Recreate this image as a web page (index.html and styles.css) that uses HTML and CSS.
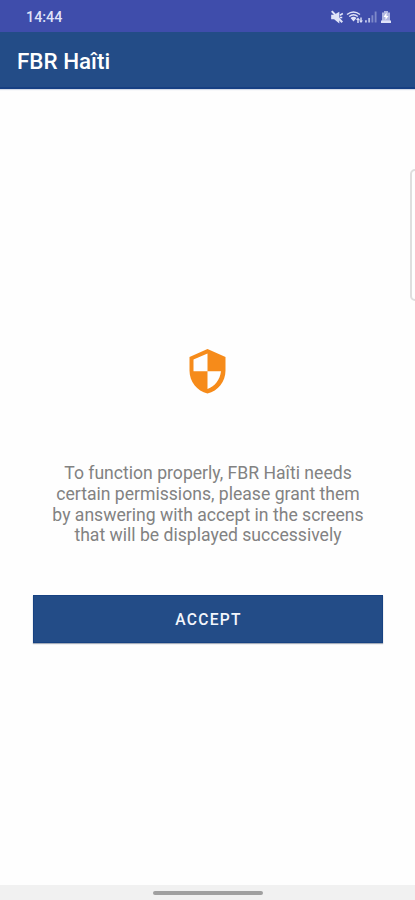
FILE: index.html
```
<!doctype html>
<html lang="en">
<head>
<meta charset="utf-8">
<title>FBR Haîti</title>
<link rel="stylesheet" href="styles.css">
</head>
<body>
<div class="screen">
	<div class="status">
		<span class="time">14:44</span>
		<div class="icons">
			<svg width="14" height="14" viewBox="0 0 24 24"><path fill="currentColor" d="M2 8v8h5l9 7V3L7 8z"/><path stroke="currentColor" stroke-width="3.500" d="M3 2l18 19"/><path stroke="currentColor" stroke-width="2.5" d="M17 9l5-3M17 13h4"/></svg>
			<svg width="17" height="14" viewBox="0 0 17 14"><path fill="none" stroke="currentColor" stroke-width="1.4" d="M1 4.5q6.500-5 13 0M3.200 6.500q4.300-3.500 8.600 0"/><path fill="currentColor" d="M4.500 8q3-2.300 6 0l-3 3.500zM12 7.500l2 2.500h-1.300v3h-1.400v-3H10zM15 13l-2-2.500h1.300v-3h1.400v3H17z"/></svg>
			<svg width="12" height="14" viewBox="0 0 13 14"><path fill="currentColor" opacity=".8" d="M0 10.500h2V13H0zM3.500 8h2v5h-2z"/><path fill="currentColor" opacity=".4" d="M7 5h2v8H7zM10.500 1h2v12h-2z"/></svg>
			<svg class="battery" width="10" height="14" viewBox="0 0 10 14"><path fill="currentColor" opacity=".7" d="M3 1h4v1.500h2V13H1V2.500h2z"/><path fill="currentColor" d="M0 10.500h10V13H0z"/><path fill="#fff" d="M5.500 2.500L2.500 7H4.500v3L7.500 6h-2z"/></svg>
		</div>
	</div>
	<div class="toolbar">FBR Haîti</div>
	<div class="content">
		<svg class="shield" width="37" height="45" viewBox="0 0 37 45"><path fill="#f68b1a" fill-rule="evenodd" d="M18.500 0L0.500 8v13.500C0.500 32.500 8 42 18.500 44.500 29 42 36.500 32.500 36.500 21.500V8zM18.500 4.500V22.200H32C31 30.500 26 37.300 18.500 39.900V22.200H4.500V10.600z"/></svg>
		<p class="message">To function properly, FBR Haîti needs<br>certain permissions, please grant them<br>by answering with accept in the screens<br>that will be displayed successively</p>
		<button class="accept">ACCEPT</button>
	</div>
	<div class="navbar"><div class="handle"></div></div>
	<div class="edge"></div>
</div>
</body>
</html>
```
FILE: styles.css
```
body{
	margin:0;
	font-family:Roboto,"Liberation Sans",sans-serif;
}
.screen{
	position:relative;
	display:flex;
	flex-direction:column;
	width:415px;
	height:900px;
	overflow:hidden;
	background:#fefefe;
}
.status{
	display:flex;
	align-items:center;
	justify-content:space-between;
	box-sizing:border-box;
	height:32px;
	padding:2px 24px 0 26px;
	background:#3f4dab;
	color:#dfe3f8;
}
.time{
	font-size:14.3px;
	font-weight:500;
}
.icons{
	display:flex;
	align-items:center;
	gap:2px;
}
.battery{
	margin-left:2px;
}
.toolbar{
	box-sizing:border-box;
	height:57px;
	padding-left:17px;
	border-bottom:2px solid #163f83;
	background:#234c87;
	color:#fff;
	font-size:22.4px;
	font-weight:500;
	line-height:59px;
	box-shadow:0 1px 1px #d5dbe8;
}
.content{
	flex:1;
	display:flex;
	flex-direction:column;
	align-items:center;
	padding:260px 32px 0 33px;
}
.shield{
	display:block;
	margin-right:1px;
}
.message{
	margin:69px 0 0;
	color:#828282;
	font-size:17.6px;
	line-height:20.8px;
	text-align:center;
	white-space:nowrap;
}
.accept{
	box-sizing:border-box;
	width:350px;
	height:48px;
	margin-top:49px;
	padding:2px 0 0 1px;
	border:1px solid #174282;
	background:#234c87;
	color:#f2f5fc;
	font-family:inherit;
	font-size:15.6px;
	font-weight:500;
	letter-spacing:1.3px;
	box-shadow:0 1px 1px #a5adba;
}
.navbar{
	display:flex;
	justify-content:center;
	box-sizing:border-box;
	height:15px;
	padding-top:6px;
	background:#f1f1f1;
}
.handle{
	width:110px;
	height:4px;
	border-radius:2px;
	background:#a0a0a0;
}
/* side panel handle, lies over the right edge */
.edge{
	position:absolute;
	top:169px;
	right:-8px;
	box-sizing:border-box;
	width:13px;
	height:132px;
	border:2px solid #dedede;
	border-radius:5px;
}
```
